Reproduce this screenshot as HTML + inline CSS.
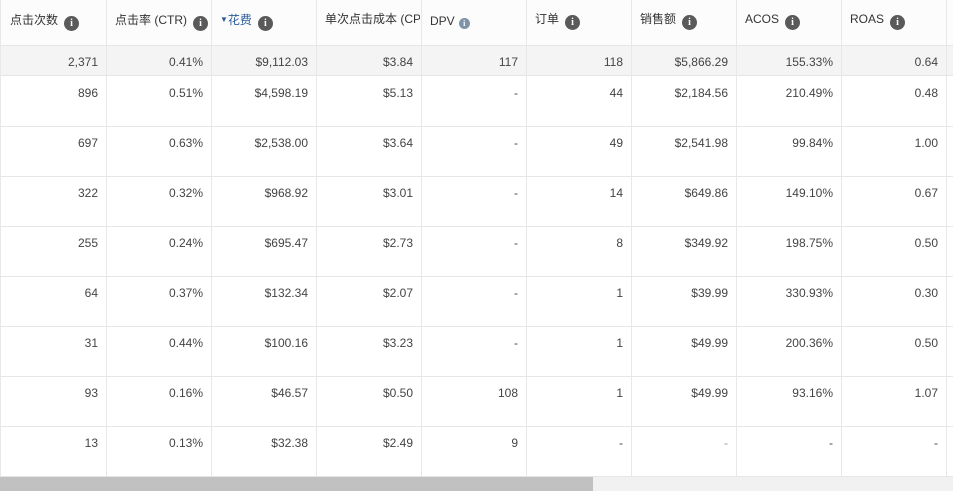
<!DOCTYPE html>
<html><head><meta charset="utf-8"><style>
*{margin:0;padding:0;box-sizing:border-box}
body{width:953px;height:491px;overflow:hidden;background:#fff;font-family:"Liberation Sans","Noto Sans CJK SC",sans-serif;font-size:12px;color:#444;position:relative}
.hdr{position:absolute;left:0;top:0;width:953px;height:46px;background:#fcfcfc;border-bottom:1px solid #e6e6e6}
.tot{position:absolute;left:0;top:46px;width:953px;height:30px;background:#f4f4f4;border-bottom:1px solid #e6e6e6}
.hl{position:absolute;left:0;width:953px;height:1px;background:#e6e6e6}
.vl{position:absolute;top:0;width:1px;height:477px;background:#e8e8e8}
.h{position:absolute;top:12px;font-size:12px;color:#333;white-space:nowrap;line-height:16px}
.i{display:inline-block;width:15px;height:15px;border-radius:50%;background:#5a5a5a;color:#fff;font:bold 10px/15px "Liberation Serif",serif;text-align:center;vertical-align:-3px;margin-left:6px;position:relative;top:-1px}
.c{position:absolute;text-align:right;width:92px;font-size:12px;line-height:14px;color:#444}
.sb{position:absolute;left:0;top:477px;width:953px;height:14px;background:#f1f1f1}
.th{position:absolute;left:0;top:477px;width:593px;height:14px;background:#c1c1c1}
</style></head><body>
<div class="hdr"></div>
<div class="tot"></div>
<div class="hl" style="top:126px"></div><div class="hl" style="top:176px"></div><div class="hl" style="top:226px"></div><div class="hl" style="top:276px"></div><div class="hl" style="top:326px"></div><div class="hl" style="top:376px"></div><div class="hl" style="top:426px"></div><div class="hl" style="top:476px"></div>
<div class="vl" style="left:0"></div><div class="vl" style="left:106px"></div><div class="vl" style="left:211px"></div><div class="vl" style="left:316px"></div><div class="vl" style="left:421px"></div><div class="vl" style="left:526px"></div><div class="vl" style="left:631px"></div><div class="vl" style="left:736px"></div><div class="vl" style="left:841px"></div><div class="vl" style="left:946px"></div>
<div class="h" style="left:10px">点击次数<span class="i">i</span></div>
<div class="h" style="left:115px">点击率 (CTR)<span class="i">i</span></div>
<div class="h" style="left:220px;color:#2a5c9a"><span style="font-size:8px;vertical-align:2px">▼</span>花费<span class="i">i</span></div>
<div class="h" style="left:325px;width:95px;overflow:hidden;top:11px">单次点击成本 (CPC)</div>
<div class="h" style="left:430px;top:13px">DPV<span class="i" style="width:11px;height:11px;font-size:8px;line-height:11px;background:#7f93a8;margin-left:4px;vertical-align:-1px;top:0">i</span></div>
<div class="h" style="left:535px;top:11px">订单<span class="i">i</span></div>
<div class="h" style="left:640px;top:11px">销售额<span class="i">i</span></div>
<div class="h" style="left:745px;top:11px">ACOS<span class="i">i</span></div>
<div class="h" style="left:850px;top:11px">ROAS<span class="i">i</span></div>
<div id="d"></div>
<div class="sb"></div><div class="th"></div>
<script>
var rows=[["2,371","0.41%","$9,112.03","$3.84","117","118","$5,866.29","155.33%","0.64"],
["896","0.51%","$4,598.19","$5.13","-","44","$2,184.56","210.49%","0.48"],
["697","0.63%","$2,538.00","$3.64","-","49","$2,541.98","99.84%","1.00"],
["322","0.32%","$968.92","$3.01","-","14","$649.86","149.10%","0.67"],
["255","0.24%","$695.47","$2.73","-","8","$349.92","198.75%","0.50"],
["64","0.37%","$132.34","$2.07","-","1","$39.99","330.93%","0.30"],
["31","0.44%","$100.16","$3.23","-","1","$49.99","200.36%","0.50"],
["93","0.16%","$46.57","$0.50","108","1","$49.99","93.16%","1.07"],
["13","0.13%","$32.38","$2.49","9","-","-","-","-"]];
var h="";
rows.forEach(function(r,i){var y=i==0?55:86+(i-1)*50;
r.forEach(function(v,j){var x=106+j*105-100;
h+='<div class="c" style="left:'+x+'px;top:'+y+'px'+(i==8&&j==6?';color:#999':'')+'">'+v+'</div>';});});
document.getElementById("d").innerHTML=h;
</script>
</body></html>
